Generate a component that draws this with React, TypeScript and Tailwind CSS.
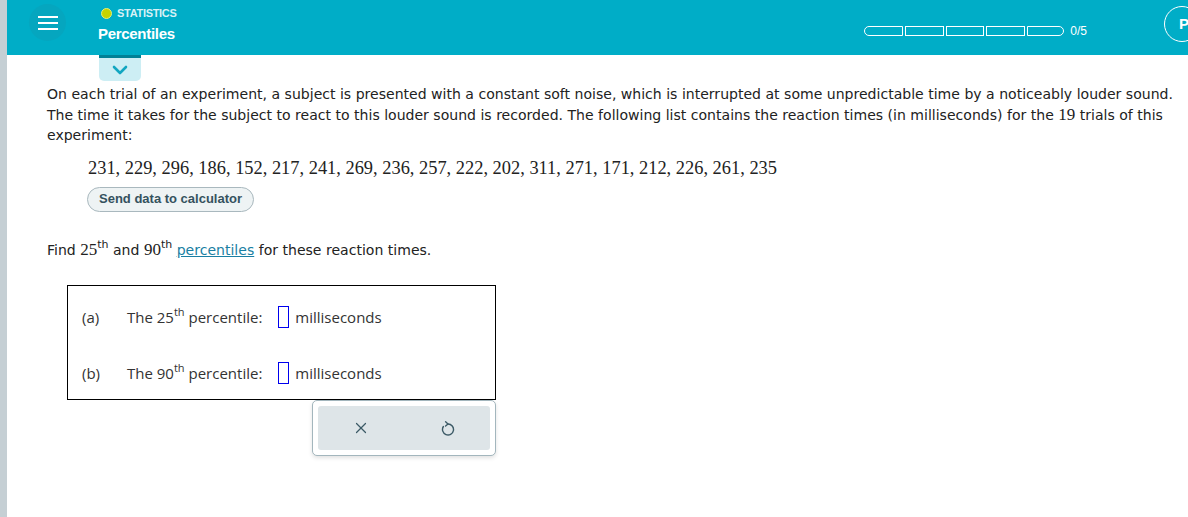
import { X } from 'lucide-react';

const values = [231, 229, 296, 186, 152, 217, 241, 269, 236, 257, 222, 202, 311, 271, 171, 212, 226, 261, 235];

function Th() {
  return <sup className="text-[11px] relative -top-[7px]">th</sup>;
}

const serif = { fontFamily: '"Liberation Serif", serif' };
const arial = { fontFamily: '"Liberation Sans", Arial, sans-serif' };

function UndoIcon() {
  return (
    <svg width="16" height="16" viewBox="0 0 16 16" className="ml-[70px]">
      <path d="M8 4 A5.5 5.5 0 1 1 3.4 6.5" fill="none" stroke="#3c5a66" strokeWidth="1.4" strokeLinecap="round" />
      <path d="M5.6 1.8 L8 4 L5.6 6" fill="none" stroke="#3c5a66" strokeWidth="1.4" strokeLinecap="round" strokeLinejoin="round" />
    </svg>
  );
}

export default function App() {
  return (
    <div className="w-[1188px] h-[517px] flex bg-white overflow-hidden" style={{ fontFamily: '"DejaVu Sans", Verdana, sans-serif' }}>
      <div className="w-[7px] shrink-0 bg-[#c5cfd4]" />
      <div className="flex-1 flex flex-col min-w-0">
        {/* header */}
        <div className="h-[55px] bg-[#00adc7] flex items-start relative shrink-0">
          <div className="w-[37px] h-[37px] rounded-full bg-[#05a6bf] ml-[22px] mt-[4px] flex flex-col items-center justify-center gap-[4px]">
            <div className="w-[20px] h-[2px] bg-white" />
            <div className="w-[20px] h-[2px] bg-white" />
            <div className="w-[20px] h-[2px] bg-white" />
          </div>
          <div className="ml-[32px] mt-[5px] flex flex-col" style={arial}>
            <div className="flex items-center gap-[5px] ml-[3px]">
              <span className="w-[11px] h-[11px] rounded-full bg-[#c6d300] border border-[#e6ee7a]" />
              <span className="text-[11px] font-bold text-[#d7f1f6] tracking-[-0.3px]">STATISTICS</span>
            </div>
            <div className="text-[15px] font-bold text-white mt-[1px] tracking-[-0.3px]">Percentiles</div>
          </div>
          <div className="ml-auto mt-[22px] flex items-center">
            <div className="flex gap-[2px]">
              <div className="w-[39px] h-[10px] border border-white rounded-l-full" />
              <div className="w-[39px] h-[10px] border border-white" />
              <div className="w-[38px] h-[10px] border border-white" />
              <div className="w-[39px] h-[10px] border border-white" />
              <div className="w-[37px] h-[10px] border border-white rounded-r-full" />
            </div>
            <span className="text-[12px] text-white ml-[6px]" style={arial}>0/5</span>
          </div>
          <div className="ml-[77px] mr-[-12px] mt-[6px] w-[36px] h-[36px] shrink-0 rounded-full border border-white flex items-center pl-[14px] text-white font-bold text-[15px]" style={arial}>
            P
          </div>
        </div>
        {/* chevron tab */}
        <div className="ml-[92px] w-[42px] h-[26px] bg-[#cdeef4] border-t-[3px] border-[#008196] rounded-b-[5px] flex items-center justify-center shrink-0">
          <svg width="16" height="10" viewBox="0 0 16 10">
            <path d="M2 2 L8 8 L14 2" fill="none" stroke="#12a6c1" strokeWidth="2.6" strokeLinecap="round" strokeLinejoin="round" />
          </svg>
        </div>
        {/* body */}
        <div className="pl-[40px] pr-[10px] text-[14.06px] leading-[20.5px] text-[#222]">
          <p className="mt-[3px]">
            On each trial of an experiment, a subject is presented with a constant soft noise, which is interrupted at some unpredictable time by a noticeably louder sound. The time it takes for the subject to react to this louder sound is recorded. The following list contains the reaction times (in milliseconds) for the <span className="text-[17px]" style={serif}>19</span> trials of this experiment:
          </p>
          <div className="ml-[41px] mt-[12px] text-[18.4px] leading-[21px]" style={serif}>
            {values.join(', ')}
          </div>
          <button className="ml-[40px] mt-[8px] h-[25px] px-[11px] rounded-full border border-[#a9b8be] bg-[#eef3f4] text-[13px] font-bold text-[#35525e]" style={arial}>
            Send data to calculator
          </button>
          <p className="mt-[28px]">
            Find <span className="text-[17px]" style={serif}>25</span><Th /> and <span className="text-[17px]" style={serif}>90</span><Th /> <span className="text-[#1a7fa3] underline">percentiles</span> for these reaction times.
          </p>
          {/* answer box */}
          <div className="ml-[20px] mt-[25px] w-[429px]">
            <div className="h-[115px] border border-black flex flex-col pt-[20px] gap-[34px] pl-[14px] text-[15px] text-[#333]" style={{ fontFamily: '"Open Sans", sans-serif' }}>
              <div className="flex items-center h-[22px]">
                <span className="w-[45px]">(a)</span>
                <span>The 25<Th /> percentile:</span>
                <span className="w-[11px] h-[22px] border border-[#0000ee] ml-[16px] mr-[6px]" />
                <span>milliseconds</span>
              </div>
              <div className="flex items-center h-[22px]">
                <span className="w-[45px]">(b)</span>
                <span>The 90<Th /> percentile:</span>
                <span className="w-[11px] h-[22px] border border-[#0000ee] ml-[16px] mr-[6px]" />
                <span>milliseconds</span>
              </div>
            </div>
            <div className="ml-[245px] w-[184px] h-[56px] border border-[#a3b6bd] rounded-[5px] shadow-[0_2px_4px_rgba(0,0,0,0.12)] p-[5px] bg-white">
              <div className="w-full h-full bg-[#dee5e8] rounded-[3px] flex items-center">
                <X className="w-[18px] h-[18px] text-[#3c5a66] ml-[34px]" strokeWidth={1.6} />
                <UndoIcon />
              </div>
            </div>
          </div>
        </div>
      </div>
    </div>
  );
}
